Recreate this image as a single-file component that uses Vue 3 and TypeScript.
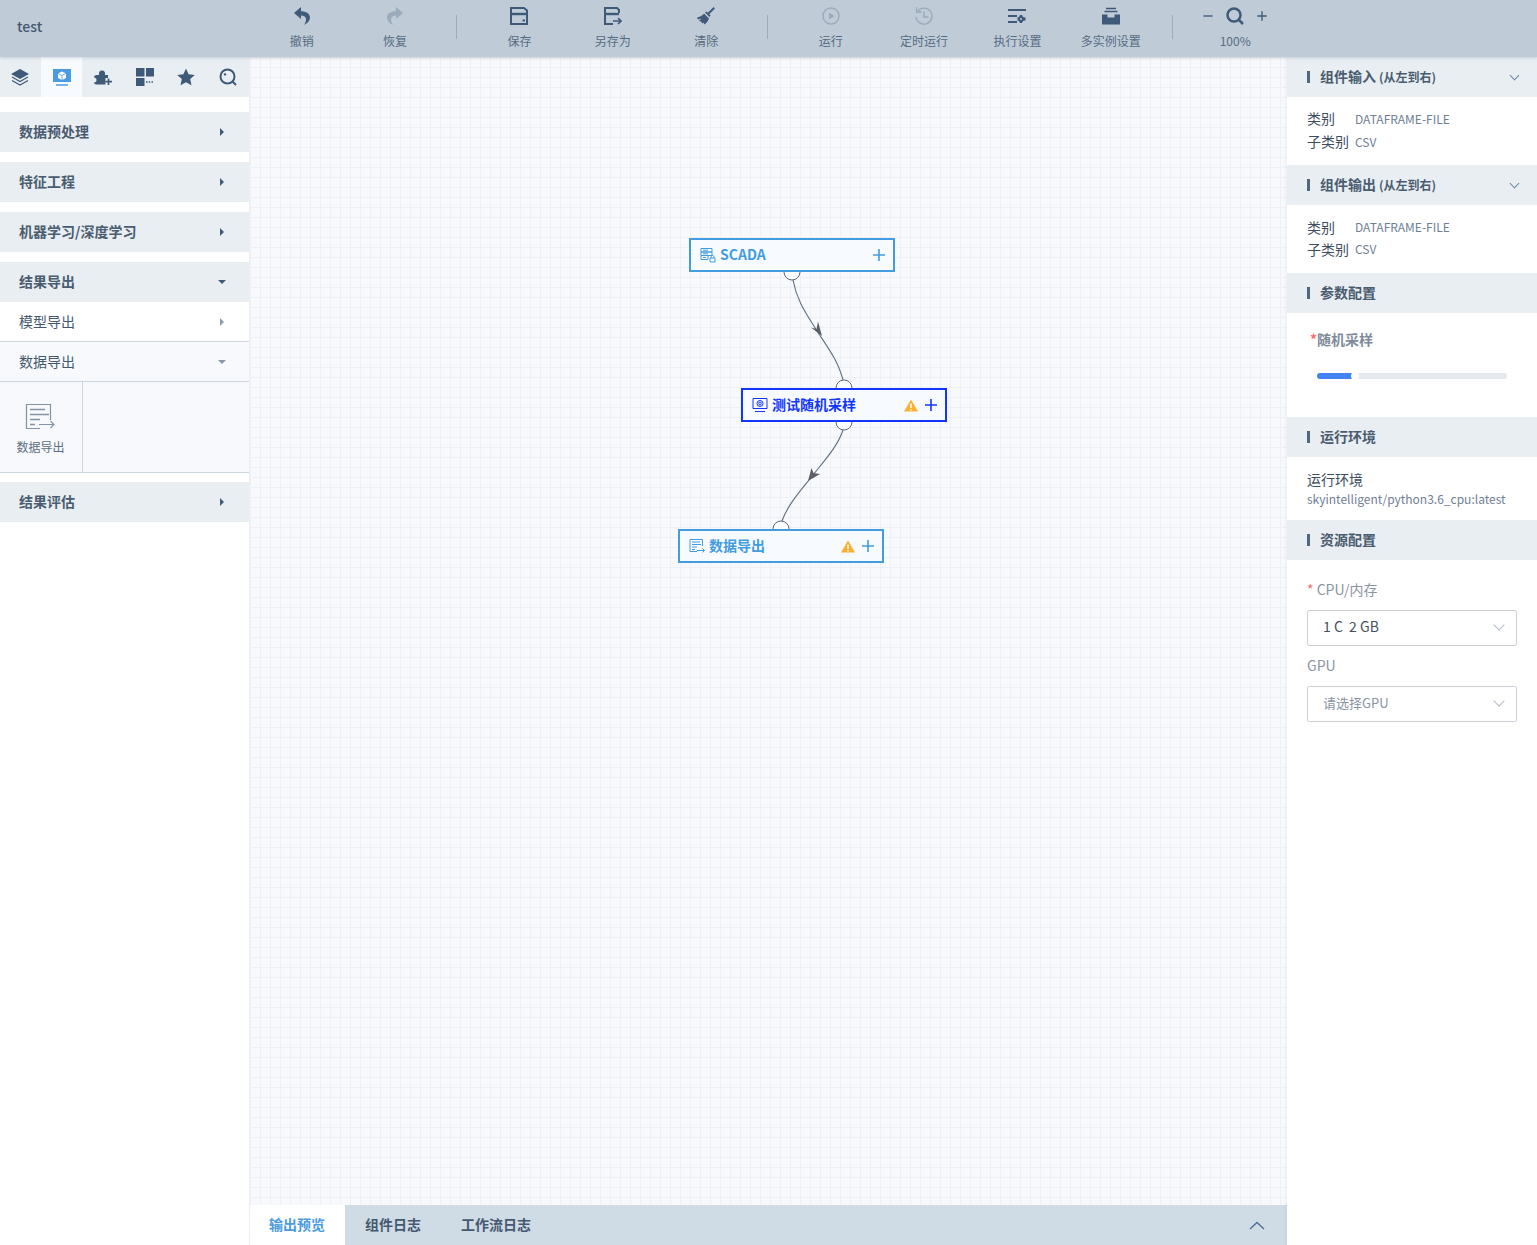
<template>
  <div class="page">
    <header class="topbar">
      <div class="title">test</div>
      <div class="tools">
        <template v-for="(tool, i) in tools" :key="i">
          <div v-if="tool.divider" class="tool-divider"></div>
          <div v-else-if="tool.zoom" class="tool tool-zoom">
            <div class="zoom-icons">
              <svg class="ic" viewBox="0 0 18 18" width="12" height="18"><path d="M2 9H16" stroke="#3f5a79" stroke-width="2" /></svg>
              <svg class="ic" viewBox="0 0 18 18" width="18" height="18"><path v-for="(s, k) in icons.search" :key="k" :d="s.d" :fill="s.fill || 'none'" :stroke="s.stroke" :stroke-width="s.w" /></svg>
              <svg class="ic" viewBox="0 0 18 18" width="12" height="18"><path d="M2 9H16M9 2V16" stroke="#3f5a79" stroke-width="2" /></svg>
            </div>
            <span class="tool-label">{{ tool.label }}</span>
          </div>
          <div v-else class="tool" :class="{ off: tool.off }">
            <svg class="ic" viewBox="0 0 18 18" width="18" height="18">
              <path v-for="(s, k) in icons[tool.icon!]" :key="k" :d="s.d" :fill="s.fill || 'none'" :stroke="s.stroke" :stroke-width="s.w" />
            </svg>
            <span class="tool-label">{{ tool.label }}</span>
          </div>
        </template>
      </div>
    </header>

    <div class="main">
      <aside class="left">
        <div class="tabs">
          <div v-for="(tab, i) in tabs" :key="tab" class="tab" :class="{ active: i === 1 }">
            <svg viewBox="0 0 18 18" width="18" height="18">
              <path v-for="(s, k) in icons[tab]" :key="k" :d="s.d" :fill="s.fill || 'none'" :stroke="s.stroke" :stroke-width="s.w" />
            </svg>
          </div>
        </div>

        <div class="groups">
          <div class="group-head">数据预处理<i class="caret caret-r"></i></div>
          <div class="group-head">特征工程<i class="caret caret-r"></i></div>
          <div class="group-head">机器学习/深度学习<i class="caret caret-r"></i></div>
          <div class="group-open">
            <div class="group-head">结果导出<i class="caret caret-d"></i></div>
            <div class="sub-head">模型导出<i class="caret caret-r small"></i></div>
            <div class="sub-head open">数据导出<i class="caret caret-d small"></i></div>
            <div class="cells">
              <div class="cell">
                <svg viewBox="0 0 30 28" width="30" height="28">
                  <path d="M25.5 17V1.5H1.5V25.5H15" fill="none" stroke="#8494a7" stroke-width="1.2" />
                  <path d="M5 6.5H20M5 11.5H24M5 16.5H15M5 21.5H10" fill="none" stroke="#8494a7" stroke-width="1.4" />
                  <path d="M14 21.5H29M25.5 18L29 21.5L25.5 25" fill="none" stroke="#8494a7" stroke-width="1.2" />
                </svg>
                <span>数据导出</span>
              </div>
            </div>
          </div>
          <div class="group-head">结果评估<i class="caret caret-r"></i></div>
        </div>
      </aside>

      <section class="center">
        <div class="canvas">
          <svg class="edges" width="1037" height="1148" viewBox="250 57 1037 1148">
            <circle v-for="p in ports" :key="p[0] + '-' + p[1]" :cx="p[0]" :cy="p[1]" r="8" fill="#fbfcfe" stroke="#5b6b7c" stroke-width="1" />
            <path d="M793 280C797 302 808 316 817 331C826 345 838 360 843 380" fill="none" stroke="#5f7082" stroke-width="1.1" />
            <path d="M822 336L811 327.5L816.5 329L818 321.5Z" fill="#5c5f66" />
            <path d="M843 430C838 446 824 461 813 475C802 489 788 504 782 521" fill="none" stroke="#5f7082" stroke-width="1.1" />
            <path d="M808 481L811.5 468L813.5 473L820 474Z" fill="#5c5f66" />
          </svg>

          <div
            v-for="node in nodes"
            :key="node.name"
            class="node"
            :style="{ left: node.x + 'px', top: node.y + 'px', color: node.color, borderColor: node.color }"
          >
            <svg viewBox="0 0 16 16" width="16" height="16" class="node-icon">
              <path v-for="(d, k) in node.icon" :key="k" :d="d" fill="none" stroke="currentColor" stroke-width="1" />
            </svg>
            <span class="node-name">{{ node.name }}</span>
            <svg v-if="node.warn" viewBox="0 0 14 13" width="14" height="13" class="node-warn">
              <path d="M7 .5L14 12.5H0Z" fill="#fbb02d" />
              <path d="M7 4.5V9M7 10V11.5" stroke="#fff" stroke-width="1.5" />
            </svg>
            <svg viewBox="0 0 12 12" width="12" height="12" class="node-plus">
              <path d="M6 0V12M0 6H12" stroke="currentColor" stroke-width="1.6" />
            </svg>
          </div>
        </div>

        <div class="bottom">
          <div class="bottom-tab active">输出预览</div>
          <div class="bottom-tab">组件日志</div>
          <div class="bottom-tab">工作流日志</div>
          <svg class="bottom-arrow" viewBox="0 0 16 9" width="16" height="9">
            <path d="M1 8L8 1.5L15 8" fill="none" stroke="#4b6f96" stroke-width="1.3" />
          </svg>
        </div>
      </section>

      <aside class="right">
        <div class="sec-head"><b>组件输入</b><small>(从左到右)</small><i class="chev"></i></div>
        <div class="sec-body kv">
          <div><label>类别</label><span>DATAFRAME-FILE</span></div>
          <div><label>子类别</label><span>CSV</span></div>
        </div>
        <div class="sec-head"><b>组件输出</b><small>(从左到右)</small><i class="chev"></i></div>
        <div class="sec-body kv second">
          <div><label>类别</label><span>DATAFRAME-FILE</span></div>
          <div><label>子类别</label><span>CSV</span></div>
        </div>
        <div class="sec-head"><b>参数配置</b></div>
        <div class="sec-body param">
          <div class="param-label"><em>*</em>随机采样</div>
          <div class="slider">
            <div class="slider-fill" :style="{ width: sliderValue + '%' }"></div>
            <div class="slider-dot" :style="{ left: sliderValue + '%' }"></div>
          </div>
        </div>
        <div class="sec-head"><b>运行环境</b></div>
        <div class="sec-body env">
          <div class="env-name">运行环境</div>
          <div class="env-value">skyintelligent/python3.6_cpu:latest</div>
        </div>
        <div class="sec-head"><b>资源配置</b></div>
        <div class="sec-body res">
          <div class="res-label"><em>*</em> CPU/内存</div>
          <div class="select"><span class="val">1 C&nbsp;&nbsp;2 GB</span><i class="chev light"></i></div>
          <div class="res-label gpu">GPU</div>
          <div class="select"><span class="ph">请选择GPU</span><i class="chev light"></i></div>
        </div>
      </aside>
    </div>
  </div>
</template>

<script setup lang="ts">
interface Shape {
  d: string
  fill?: string
  stroke?: string
  w?: number
}

interface Tool {
  label?: string
  icon?: string
  off?: boolean
  divider?: boolean
  zoom?: boolean
}

const dark = '#3f5a79'
const blue = '#4a9be0'

// 工具栏和标签页图标
const icons: Record<string, Shape[]> = {
  undo: [{ d: 'M8 0L1 6L8 12V8.5C11 8.5 13 10 13 12.5C13 14.5 12 16.5 11 18C14.5 16.5 17 13.5 17 10.5C17 6.5 13 4.2 8 4.2Z', fill: dark }],
  redo: [{ d: 'M10 0L17 6L10 12V8.5C7 8.5 5 10 5 12.5C5 14.5 6 16.5 7 18C3.5 16.5 1 13.5 1 10.5C1 6.5 5 4.2 10 4.2Z', fill: dark }],
  save: [
    { d: 'M1 1H14L17 3.5V17H1Z', stroke: dark, w: 2 },
    { d: 'M1 7H17', stroke: dark, w: 2.4 },
    { d: 'M12.5 12.5H15V14.5H12.5Z', fill: dark }
  ],
  saveas: [
    { d: 'M15 6V3L13 1H1V17H9', stroke: dark, w: 2 },
    { d: 'M1 7H15', stroke: dark, w: 2.4 },
    { d: 'M9 14H17M14 11L17 14L14 17', stroke: dark, w: 1.6 }
  ],
  clean: [
    { d: 'M16.6 0L18 1.4L12 7.5L10.5 6Z', fill: dark },
    { d: 'M9.5 4.5L13.5 8.5L12.5 10L8 5.5Z', fill: dark },
    { d: 'M7 6.5L12 11.5C11 14 9.5 16 7.5 17.5L6.5 15.5L5.5 16.5L4 14.5L2 14L4.5 11.5L1 12.5L0 10.5C3 10 5.5 8.5 7 6.5Z', fill: dark }
  ],
  play: [
    { d: 'M9 1A8 8 0 1 1 9 17A8 8 0 1 1 9 1Z', stroke: dark, w: 1.4 },
    { d: 'M7 5.5L12.5 9L7 12.5Z', fill: dark }
  ],
  clock: [
    { d: 'M2.8 4A8 8 0 1 1 1 10', stroke: dark, w: 1.4 },
    { d: 'M1.5 0V5H6.5', stroke: dark, w: 1.4 },
    { d: 'M9 4.5V10H13.5', stroke: dark, w: 1.4 }
  ],
  exec: [
    { d: 'M0 3H18M0 9H9M0 15H9', stroke: dark, w: 2 },
    { d: 'M14 8L15 10L17.5 10.5V13.5L15 14L14 16L12 16L11 14L9.5 13.5V10.5L11 10L12 8Z', fill: dark },
    { d: 'M13 11A1 1 0 1 1 13 13A1 1 0 1 1 13 11Z', fill: '#bfcbd7' }
  ],
  inbox: [
    { d: 'M4 1.5H14M2.5 4.5H15.5', stroke: dark, w: 1.5 },
    { d: 'M0 7.5H5.5V10.5H12.5V7.5H18V17.5H0Z', fill: dark }
  ],
  search: [
    { d: 'M8 1.5A6.5 6.5 0 1 1 8 14.5A6.5 6.5 0 1 1 8 1.5Z', stroke: dark, w: 2.5 },
    { d: 'M12.5 12.5L17 17', stroke: dark, w: 2.5 }
  ],
  layers: [
    { d: 'M8 1L17 6L8 11L-1 6Z', fill: dark },
    { d: 'M0 9L8 13.5L16 9M0 12.5L8 17L16 12.5', stroke: dark, w: 1.2 }
  ],
  monitor: [
    { d: 'M0 1H18V14H0Z', fill: blue },
    { d: 'M9 3.5L13 5.5V10L9 12L5 10V5.5Z', fill: '#fff' },
    { d: 'M5 5.5L9 7.5L13 5.5M9 7.5V12', stroke: blue, w: 0.8 },
    { d: 'M3 17H15', stroke: blue, w: 1.5 }
  ],
  puzzle: [
    { d: 'M0 9.5C0 8 1 7 2.5 7H5C4.5 4.5 5.5 2.5 8 2.5C10.5 2.5 11.5 4.5 11 7H14V10H11.5V16.5H2.5C1 16.5 0 15.5 0 14.5C2 14.5 2.5 13.5 2.5 12C2.5 10.5 1.5 9.5 0 9.5Z', fill: dark },
    { d: 'M14.5 10.5V17M11.5 13.7H18', stroke: dark, w: 1.7 }
  ],
  blocks: [
    { d: 'M0 0H8.5V8.5H0ZM10 0H18V8.5H10ZM0 10H8.5V18H0Z', fill: dark },
    { d: 'M10 14H11.5M12.7 14H14.2M15.5 14H17', stroke: dark, w: 1.3 }
  ],
  star: [{ d: 'M9 .5L11.6 6.2L17.8 6.9L13.2 11.1L14.5 17.3L9 14.2L3.5 17.3L4.8 11.1L.2 6.9L6.4 6.2Z', fill: dark }],
  find: [
    { d: 'M8.5 1.5A7 7 0 1 1 8.5 15.5A7 7 0 1 1 8.5 1.5Z', stroke: dark, w: 2 },
    { d: 'M13.5 13.5L17 17', stroke: dark, w: 2 },
    { d: 'M6 5.2A1.2 1.2 0 1 1 6 7.6A1.2 1.2 0 1 1 6 5.2Z', fill: dark }
  ]
}

const tabs = ['layers', 'monitor', 'puzzle', 'blocks', 'star', 'find']

const tools: Tool[] = [
  { label: '撤销', icon: 'undo' },
  { label: '恢复', icon: 'redo', off: true },
  { divider: true },
  { label: '保存', icon: 'save' },
  { label: '另存为', icon: 'saveas' },
  { label: '清除', icon: 'clean' },
  { divider: true },
  { label: '运行', icon: 'play', off: true },
  { label: '定时运行', icon: 'clock', off: true },
  { label: '执行设置', icon: 'exec' },
  { label: '多实例设置', icon: 'inbox' },
  { divider: true },
  { label: '100%', zoom: true }
]

// 画布上的节点，坐标相对画布左上角
const nodes = [
  {
    name: 'SCADA',
    x: 439,
    y: 181,
    color: '#439ce0',
    warn: false,
    icon: ['M1 1.5H12V5H1Z', 'M1 5H12V8.5H1Z', 'M1 8.5H8V12.5H1Z', 'M3 3.2H8M3 6.8H8M3 10.5H6', 'M10 11H15V15H10Z', 'M11.2 11V9.5C11.2 8 13.8 8 13.8 9.5V11']
  },
  {
    name: '测试随机采样',
    x: 491,
    y: 331,
    color: '#1236ff',
    warn: true,
    icon: ['M1 1.5H15V11.5H1Z', 'M8 3.5A3 3 0 1 1 8 9.5A3 3 0 1 1 8 3.5Z', 'M8 5.2A1.3 1.3 0 1 1 8 7.8A1.3 1.3 0 1 1 8 5.2Z', 'M3 14.5H13']
  },
  {
    name: '数据导出',
    x: 428,
    y: 472,
    color: '#439ce0',
    warn: true,
    icon: ['M13.5 8V1.5H1V13.5H8', 'M3 4H11M3 6.5H12M3 9H8M3 11.5H6', 'M8 12.5H15.5M13.5 10.5L15.5 12.5L13.5 14.5']
  }
]

const ports = [
  [792, 272],
  [844, 388],
  [844, 422],
  [781, 529]
]

const sliderValue = 20
</script>

<style>
html,
body {
  margin: 0;
  background: #fff;
}
</style>

<style scoped>
.page {
  height: 1245px;
  display: flex;
  flex-direction: column;
  overflow: hidden;
  font-family: "Noto Sans CJK SC", "Noto Sans", sans-serif;
  color: #44596f;
}

.topbar {
  height: 57px;
  flex: none;
  display: flex;
  background: #bfcbd7;
  position: relative;
  z-index: 2;
  box-shadow: 0 1px 3px rgba(90, 110, 130, 0.25);
}

.title {
  width: 255px;
  flex: none;
  padding-left: 17px;
  box-sizing: border-box;
  font-size: 14px;
  font-weight: 500;
  line-height: 52px;
  color: #44596f;
}

.tools {
  display: flex;
}

.tool {
  width: 93.4px;
  display: flex;
  flex-direction: column;
  align-items: center;
  padding-top: 7px;
  box-sizing: border-box;
}

.tool.off .ic {
  opacity: 0.28;
}

.tool-label {
  margin-top: 7px;
  font-size: 12px;
  line-height: 17px;
  color: #566b82;
}

.tool-divider {
  width: 1px;
  height: 24px;
  margin: 15px 15.5px 0 14.5px;
  background: #9dadbd;
}

.zoom-icons {
  display: flex;
  gap: 12px;
  align-items: center;
}

.main {
  flex: 1;
  min-height: 0;
  display: flex;
}

.left {
  width: 250px;
  flex: none;
  box-sizing: border-box;
  border-right: 1px solid #eceff3;
  background: #fff;
}

.tabs {
  display: grid;
  grid-template-columns: 41px 41px 42px 41px 42px 42px;
  height: 40px;
  background: #e9eef2;
}

.tab {
  display: flex;
  align-items: center;
  justify-content: center;
}

.tab svg {
  overflow: visible;
}

.tab.active {
  background: #f7fbff;
}

.groups {
  padding-top: 15px;
  display: flex;
  flex-direction: column;
  gap: 10px;
}

.group-open {
  margin-bottom: -1px;
}

.group-head,
.sub-head {
  height: 40px;
  display: flex;
  align-items: center;
  justify-content: space-between;
  padding: 0 25px 2px 19px;
  font-size: 14px;
  box-sizing: border-box;
}

.group-head {
  background: #e9eef2;
  font-weight: 700;
  color: #4a5c70;
}

.sub-head {
  border-bottom: 1px solid #ccd6e0;
  color: #44596f;
}

.sub-head.open {
  background: #f7f9fc;
}

.caret {
  width: 0;
  height: 0;
  display: block;
  margin-top: 2px;
}

.caret-r {
  border-top: 4px solid transparent;
  border-bottom: 4px solid transparent;
  border-left: 4px solid #3f5a79;
}

.caret-d {
  border-left: 4px solid transparent;
  border-right: 4px solid transparent;
  border-top: 4px solid #3f5a79;
  margin-right: -2px;
}

.caret.small {
  opacity: 0.6;
}

.cells {
  height: 91px;
  box-sizing: border-box;
  border-bottom: 1px solid #ccd6e0;
  background: #f7f9fc;
}

.cell {
  width: 83px;
  height: 90px;
  box-sizing: border-box;
  border-right: 1px solid #ccd6e0;
  display: flex;
  flex-direction: column;
  align-items: center;
  padding-top: 21px;
  font-size: 12px;
  color: #5d6f83;
}

.cell svg {
  margin-left: -2px;
}

.cell span {
  margin-top: 7px;
  margin-left: -1px;
  line-height: 18px;
}

.center {
  flex: 1;
  min-width: 0;
  display: flex;
  flex-direction: column;
}

.canvas {
  flex: 1;
  position: relative;
  background-color: #f7f9fc;
  background-image:
    linear-gradient(to right, #eef0f5 1px, transparent 1px),
    linear-gradient(to bottom, #eef0f5 1px, transparent 1px);
  background-size: 10px 10px;
  overflow: hidden;
}

.edges {
  position: absolute;
  left: 0;
  top: 0;
}

.node {
  position: absolute;
  width: 206px;
  height: 34px;
  box-sizing: border-box;
  border: 2px solid;
  background: #f7fbff;
  display: flex;
  align-items: center;
  padding: 0 8px 0 9px;
  font-size: 14px;
  font-weight: 700;
}

.node-icon {
  flex: none;
  margin-right: 4px;
}

.node-name {
  flex: 1;
  margin-bottom: 2px;
}

.node-warn {
  margin-right: 7px;
}

.bottom {
  height: 40px;
  flex: none;
  display: flex;
  align-items: center;
  background: #cfdbe5;
  font-size: 14px;
  font-weight: 700;
  position: relative;
}

.bottom-tab {
  padding: 0 20px 2px;
  line-height: 38px;
  color: #44596f;
}

.bottom-tab.active {
  padding-left: 19px;
  background: #fff;
  color: #4a9be0;
}

.bottom-arrow {
  margin-left: auto;
  margin-right: 22px;
}

.right {
  width: 250px;
  flex: none;
  background: #fff;
  box-shadow: -1px 0 3px rgba(120, 140, 160, 0.12);
  position: relative;
}

.sec-head {
  height: 40px;
  display: flex;
  align-items: center;
  background: #e9eef2;
  padding: 0 19px 0 20px;
  color: #4a5c70;
}

.sec-head::before {
  content: "";
  width: 3px;
  height: 12px;
  margin-right: 10px;
  background: #51667f;
}

.sec-head b {
  font-size: 14px;
  font-weight: 700;
  margin-bottom: 2px;
}

.sec-head small {
  font-size: 12px;
  font-weight: 700;
  margin-left: 3px;
  margin-bottom: 2px;
}

.chev {
  width: 7px;
  height: 7px;
  margin-left: auto;
  margin-top: -4px;
  box-sizing: border-box;
  border-right: 1px solid #6d8aa8;
  border-bottom: 1px solid #6d8aa8;
  transform: rotate(45deg);
}

.chev.light {
  border-color: #b3bdc9;
}

.sec-body {
  box-sizing: border-box;
  padding: 0 20px;
}

.kv {
  height: 68px;
  padding-top: 10px;
  font-size: 14px;
  line-height: 23px;
}

.kv.second {
  padding-top: 11px;
  line-height: 22px;
}

.kv div {
  display: flex;
  align-items: center;
}

.kv label {
  width: 48px;
  color: #3c4d60;
}

.kv span {
  font-size: 12px;
  color: #6f8096;
}

.param {
  height: 104px;
  padding-top: 16px;
}

.param-label {
  padding-left: 3px;
  font-size: 14px;
  font-weight: 700;
  line-height: 20px;
  color: #7f8b9b;
}

.param-label em,
.res-label em {
  color: #f56c6c;
  font-style: normal;
}

.slider {
  position: relative;
  margin: 24px 10px 0;
  height: 6px;
  border-radius: 3px;
  background: #e4e8ef;
}

.slider-fill {
  height: 6px;
  border-radius: 3px;
  background: #4680f5;
}

.slider-dot {
  position: absolute;
  top: -1px;
  width: 8px;
  height: 8px;
  margin-left: -4px;
  border-radius: 50%;
  background: #fff;
}

.env {
  height: 63px;
  padding-top: 12px;
}

.env-name {
  font-size: 14px;
  line-height: 21px;
  color: #3c4d60;
}

.env-value {
  font-size: 12px;
  line-height: 18px;
  color: #6f8096;
}

.res {
  padding-top: 19px;
}

.res-label {
  font-size: 14px;
  line-height: 20px;
  margin-bottom: 11px;
  color: #8a94a3;
}

.res-label.gpu {
  margin-top: 9px;
}

.select {
  width: 210px;
  height: 36px;
  box-sizing: border-box;
  border: 1px solid #cdd2da;
  border-radius: 2px;
  display: flex;
  align-items: center;
  padding: 0 15px 3px;
  font-size: 13px;
}

.select .val {
  font-size: 14px;
  margin-bottom: 2px;
  color: #44505e;
}

.select .ph {
  color: #8a94a3;
}

.select .chev {
  width: 8px;
  height: 8px;
  margin-right: -2px;
  margin-top: -3px;
}
</style>
